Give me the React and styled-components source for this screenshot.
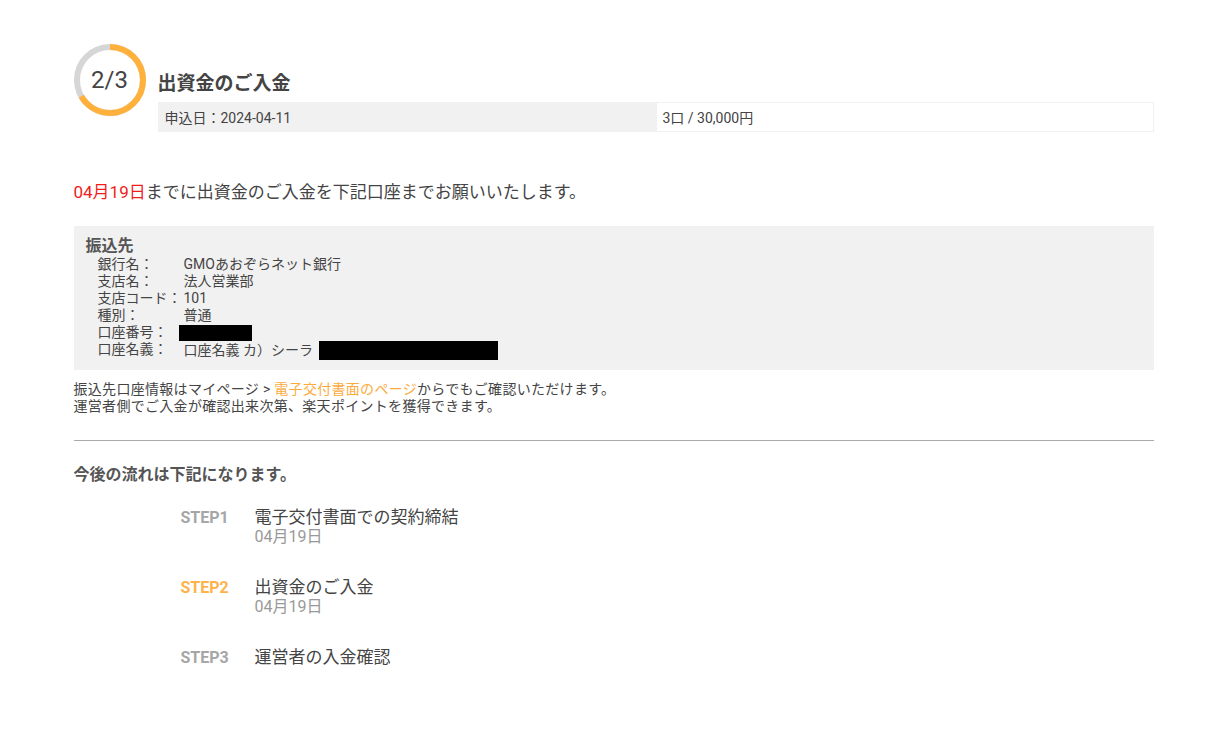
import React from "react";
import styled, { createGlobalStyle } from "styled-components";

const Global = createGlobalStyle`
  html, body { margin: 0; padding: 0; background: #fff; }
  body { font-family: Roboto, "Noto Sans CJK JP", sans-serif; color: #444; }
`;

const Page = styled.div`
  width: 1080px;
  margin: 0 auto;
  padding-top: 44px;
  padding-bottom: 40px;
`;

const Header = styled.div`
  display: flex;
  gap: 12px;
  align-items: flex-start;
`;

const Ring = styled.div`
  position: relative;
  width: 72px;
  height: 72px;
  flex: none;
  display: flex;
  align-items: center;
  justify-content: center;
`;

const RingSvg = styled.svg`
  position: absolute;
  inset: 0;
`;

const RingLabel = styled.span`
  font-size: 24px;
  color: #444;
  font-family: Roboto, sans-serif;
  position: relative;
`;

const HeaderBody = styled.div`
  flex: 1;
  padding-top: 27px;
`;

const Title = styled.h1`
  margin: 0 0 5px;
  font-size: 19px;
  line-height: 26px;
  font-weight: bold;
  color: #444;
`;

const InfoTable = styled.div`
  display: grid;
  grid-template-columns: 1fr 1fr;
  height: 30px;
`;

const InfoCell = styled.div`
  font-size: 14px;
  color: #444;
  padding: 4px 6px 0 6px;
  box-sizing: border-box;
  background: ${(p) => (p.$shaded ? "#f1f1f1" : "#fff")};
  border: 1px solid #f1f1f1;
`;

const Lead = styled.p`
  margin: 48px 0 0;
  font-size: 17px;
  line-height: 24px;
  color: #444;
`;

const Red = styled.span`
  color: #f31c1c;
`;

const BankBox = styled.div`
  margin-top: 22px;
  background: #f1f1f1;
  padding: 10px 12px 12px;
  height: 144px;
  box-sizing: border-box;
`;

const BankHead = styled.div`
  font-size: 16px;
  font-weight: bold;
  color: #555;
  line-height: 20px;
`;

const BankRow = styled.div`
  display: grid;
  grid-template-columns: 86px auto;
  padding-left: 12px;
  font-size: 14px;
  line-height: 17px;
  color: #444;
  white-space: nowrap;
`;

const BankValue = styled.div`
  display: flex;
  align-items: center;
`;

const Redact = styled.span`
  display: inline-block;
  background: #000;
  width: ${(p) => p.$w}px;
  height: ${(p) => p.$h}px;
  margin-left: ${(p) => p.$ml || 0}px;
`;

const Notes = styled.div`
  margin-top: 11px;
  font-size: 14px;
  line-height: 17px;
  letter-spacing: 0.3px;
  color: #444;
`;

const Link = styled.span`
  color: #fbab3c;
`;

const Divider = styled.hr`
  margin: 25px 0 0;
  border: none;
  border-top: 1px solid #aaa;
  height: 0;
`;

const FlowHead = styled.h2`
  margin: 24px 0 0;
  font-size: 16px;
  line-height: 20px;
  font-weight: bold;
  color: #555;
`;

const Steps = styled.div`
  margin-top: 22px;
  padding-left: 107px;
  display: flex;
  flex-direction: column;
  gap: 31px;
`;

const Step = styled.div`
  display: grid;
  grid-template-columns: 74px auto;
  align-items: start;
`;

const StepLabel = styled.div`
  font-size: 16px;
  font-weight: bold;
  line-height: 20px;
  padding-top: 1px;
  color: ${(p) => (p.$active ? "#ffb347" : "#a6a6a6")};
  font-family: Roboto, sans-serif;
`;

const StepTitle = styled.div`
  font-size: 17px;
  line-height: 20px;
  color: #444;
`;

const StepDate = styled.div`
  font-size: 16px;
  line-height: 19px;
  color: #999;
`;

const bank = [
  ["銀行名：", "GMOあおぞらネット銀行"],
  ["支店名：", "法人営業部"],
  ["支店コード：", "101"],
  ["種別：", "普通"],
];

const steps = [
  { label: "STEP1", title: "電子交付書面での契約締結", date: "04月19日" },
  { label: "STEP2", title: "出資金のご入金", date: "04月19日", active: true },
  { label: "STEP3", title: "運営者の入金確認" },
];

export default function App() {
  const r = 33;
  const c = 2 * Math.PI * r;
  return (
    <>
      <Global />
      <Page>
        <Header>
          <Ring>
            <RingSvg width="72" height="72" viewBox="0 0 72 72">
              <circle cx="36" cy="36" r={r} fill="none" stroke="#d6d6d6" strokeWidth="6" />
              <circle
                cx="36"
                cy="36"
                r={r}
                fill="none"
                stroke="#ffb13b"
                strokeWidth="6"
                strokeDasharray={`${(c * 2) / 3} ${c}`}
                transform="rotate(-90 36 36)"
              />
            </RingSvg>
            <RingLabel>2/3</RingLabel>
          </Ring>
          <HeaderBody>
            <Title>出資金のご入金</Title>
            <InfoTable>
              <InfoCell $shaded>申込日：2024-04-11</InfoCell>
              <InfoCell>3口 / 30,000円</InfoCell>
            </InfoTable>
          </HeaderBody>
        </Header>

        <Lead>
          <Red>04月19日</Red>までに出資金のご入金を下記口座までお願いいたします。
        </Lead>

        <BankBox>
          <BankHead>振込先</BankHead>
          {bank.map(([k, v]) => (
            <BankRow key={k}>
              <div>{k}</div>
              <BankValue>{v}</BankValue>
            </BankRow>
          ))}
          <BankRow>
            <div>口座番号：</div>
            <BankValue>
              <Redact $w={73} $h={16} $ml={-5} />
            </BankValue>
          </BankRow>
          <BankRow>
            <div>口座名義：</div>
            <BankValue>
              口座名義 カ）シーラ
              <Redact $w={179} $h={19} $ml={6} />
            </BankValue>
          </BankRow>
        </BankBox>

        <Notes>
          振込先口座情報はマイページ &gt; <Link>電子交付書面のページ</Link>からでもご確認いただけます。
          <br />
          運営者側でご入金が確認出来次第、楽天ポイントを獲得できます。
        </Notes>

        <Divider />

        <FlowHead>今後の流れは下記になります。</FlowHead>

        <Steps>
          {steps.map((s) => (
            <Step key={s.label}>
              <StepLabel $active={s.active}>{s.label}</StepLabel>
              <div>
                <StepTitle>{s.title}</StepTitle>
                {s.date && <StepDate>{s.date}</StepDate>}
              </div>
            </Step>
          ))}
        </Steps>
      </Page>
    </>
  );
}
